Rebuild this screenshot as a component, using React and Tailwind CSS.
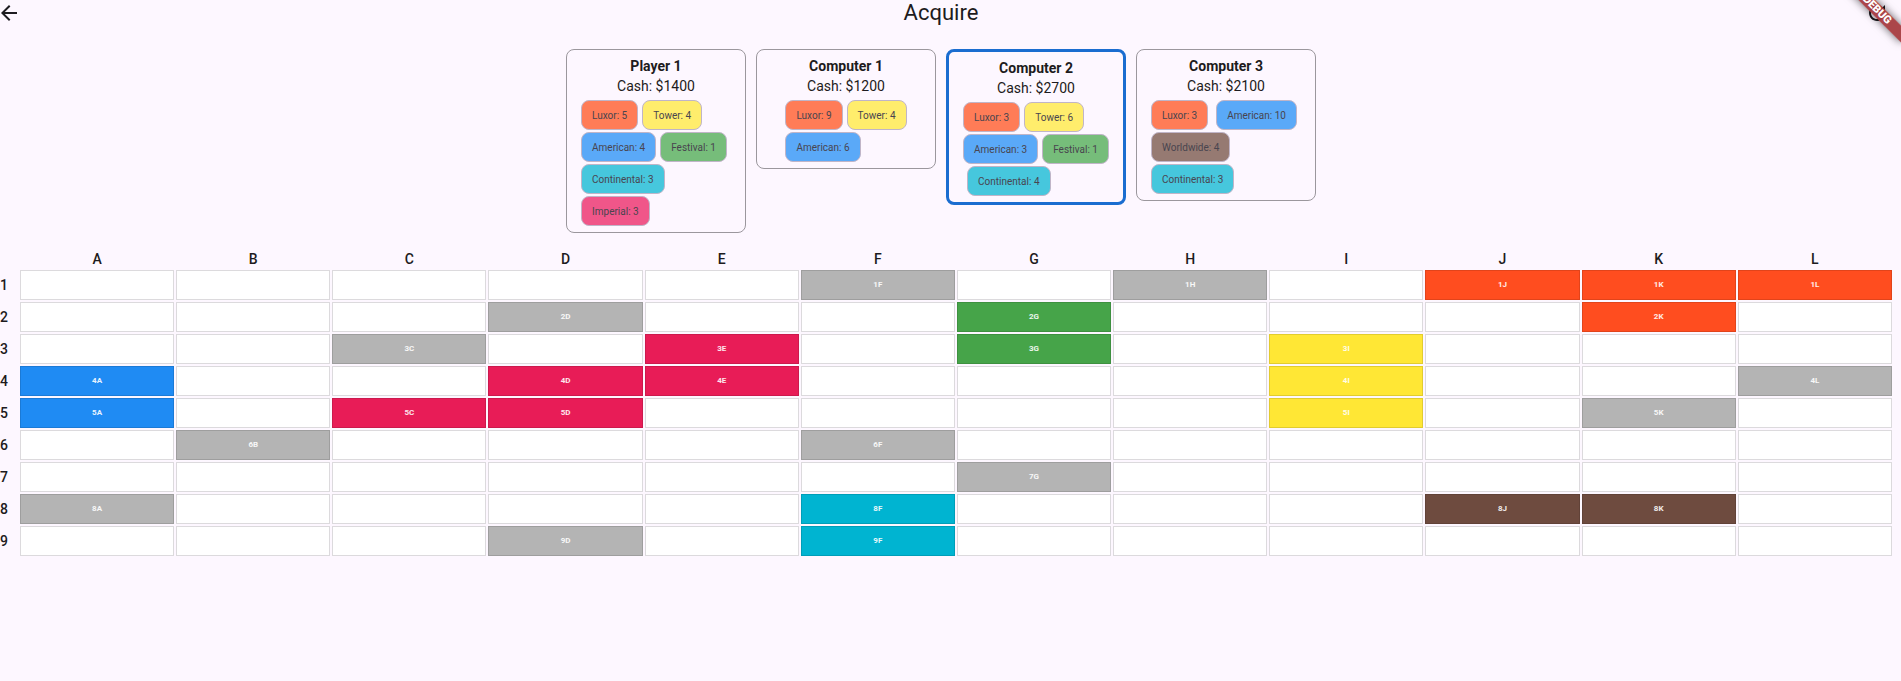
import React from 'react';

const chains = {
  Luxor: { chip: 'bg-[#ff7c57]', tile: 'bg-[#ff4d1f] border-[#e1441b]' },
  Tower: { chip: 'bg-[#ffed6c]', tile: 'bg-[#ffe735] border-[#e1cc2f]' },
  American: { chip: 'bg-[#5aa9f8]', tile: 'bg-[#1f8bf3] border-[#1b7ad6]' },
  Festival: { chip: 'bg-[#76bd7a]', tile: 'bg-[#46a449] border-[#3e9040]' },
  Worldwide: { chip: 'bg-[#967a72]', tile: 'bg-[#6e4b3f] border-[#614238]' },
  Continental: { chip: 'bg-[#46c7dd]', tile: 'bg-[#00b4d1] border-[#009eb8]' },
  Imperial: { chip: 'bg-[#f05689]', tile: 'bg-[#e81c57] border-[#cc194d]' },
};

// Each row lists [chain, shares]; null is a chain without shares, which keeps its gap.
const players = [
  {
    name: 'Player 1',
    cash: 1400,
    rows: [
      [['Luxor', 5], ['Tower', 4]],
      [['American', 4], ['Festival', 1], null],
      [['Continental', 3]],
      [['Imperial', 3]],
    ],
  },
  {
    name: 'Computer 1',
    cash: 1200,
    rows: [[['Luxor', 9], ['Tower', 4]], [['American', 6], null, null, null]],
  },
  {
    name: 'Computer 2',
    cash: 2700,
    active: true,
    rows: [
      [['Luxor', 3], ['Tower', 6]],
      [['American', 3], ['Festival', 1]],
      [null, ['Continental', 4], null],
    ],
  },
  {
    name: 'Computer 3',
    cash: 2100,
    rows: [
      [['Luxor', 3], null, ['American', 10], null],
      [['Worldwide', 4]],
      [['Continental', 3], null],
    ],
  },
];

const columns = 'ABCDEFGHIJKL'.split('');
const rows = [1, 2, 3, 4, 5, 6, 7, 8, 9];

const owners = {
  '1J': 'Luxor', '1K': 'Luxor', '1L': 'Luxor', '2K': 'Luxor',
  '2G': 'Festival', '3G': 'Festival',
  '3E': 'Imperial', '4E': 'Imperial', '4D': 'Imperial', '5C': 'Imperial', '5D': 'Imperial',
  '3I': 'Tower', '4I': 'Tower', '5I': 'Tower',
  '4A': 'American', '5A': 'American',
  '8F': 'Continental', '9F': 'Continental',
  '8J': 'Worldwide', '8K': 'Worldwide',
};
const loose = ['1F', '1H', '2D', '3C', '4L', '5K', '6B', '6F', '7G', '8A', '9D'];

function PlayerCard({ player }) {
  return (
    <section
      className={`flex w-[180px] flex-col items-center rounded-lg py-1.5 ${
        player.active ? 'border-3 border-[#1a6dd0]' : 'border border-[#9b979d]'
      }`}
    >
      <h2 className="text-sm/5 font-bold">{player.name}</h2>
      <p className="text-sm/5">Cash: ${player.cash}</p>
      <div className="mt-1 flex flex-col gap-0.5">
        {player.rows.map((row, i) => (
          <div key={i} className="flex gap-1">
            {row.map((share, j) =>
              share ? (
                <span
                  key={j}
                  className={`flex h-[30px] items-center whitespace-nowrap rounded-lg border border-[#c0b5c8] px-2.5 text-[10px] text-[#49454f] ${chains[share[0]].chip}`}
                >
                  {share[0]}: {share[1]}
                </span>
              ) : (
                <span key={j} className="w-0" />
              )
            )}
          </div>
        ))}
      </div>
    </section>
  );
}

function Tile({ id }) {
  const look = owners[id]
    ? chains[owners[id]].tile
    : loose.includes(id)
      ? 'bg-[#b4b4b4] border-[#9e9e9e]'
      : 'bg-white border-[#dcdadd]';
  const played = owners[id] || loose.includes(id);
  return (
    <div className={`flex h-[30px] items-center justify-center border text-[8px] font-bold text-white/90 ${look}`}>
      {played ? id : null}
    </div>
  );
}

export default function App() {
  return (
    <div className="relative min-h-screen overflow-hidden bg-[#fdf7ff] font-[Roboto,sans-serif] text-[#1d1b20]">
      <header className="flex items-center justify-between pr-3 pb-[15px]">
        <button type="button" aria-label="Back" className="w-[31px]">
          <svg viewBox="3 0 18 24" className="h-6 w-[18px]" fill="currentColor">
            <path d="M20 11H7.83l5.59-5.59L12 4l-8 8 8 8 1.41-1.41L7.83 13H20v-2z" />
          </svg>
        </button>
        <h1 className="pr-3.5 text-[22px]/[26px]">Acquire</h1>
        <button type="button" aria-label="Refresh">
          <svg viewBox="0 0 24 24" className="size-6" fill="currentColor">
            <path d="M17.65 6.35A7.958 7.958 0 0 0 12 4c-4.42 0-7.99 3.58-7.99 8s3.57 8 7.99 8c3.73 0 6.84-2.55 7.73-6h-2.08A5.99 5.99 0 0 1 12 18c-3.31 0-6-2.69-6-6s2.69-6 6-6c1.66 0 3.14.69 4.22 1.78L13 11h7V4l-2.35 2.35z" />
          </svg>
        </button>
      </header>

      <main>
        <div className="flex items-start justify-center gap-2.5 pt-2 pr-[19px]">
          {players.map((player) => (
            <PlayerCard key={player.name} player={player} />
          ))}
        </div>

        <div className="mt-4 pr-2">
          <table className="w-full table-fixed border-separate border-spacing-0">
            <thead>
              <tr>
                <td className="w-[19px] p-0" />
                {columns.map((c) => (
                  <th key={c} scope="col" className="p-0 text-center text-sm/5 font-medium">
                    {c}
                  </th>
                ))}
              </tr>
            </thead>
            <tbody>
              {rows.map((r) => (
                <tr key={r}>
                  <th scope="row" className="p-0 text-left text-sm/5 font-medium">
                    {r}
                  </th>
                  {columns.map((c) => (
                    <td key={c} className="p-px">
                      <Tile id={`${r}${c}`} />
                    </td>
                  ))}
                </tr>
              ))}
            </tbody>
          </table>
        </div>
      </main>

      <div className="pointer-events-none absolute -top-3.5 right-0 size-0">
        <div className="absolute top-0 left-0 origin-top-left rotate-45">
          <div className="absolute top-7 -left-10 h-3 w-20 bg-[#a63c40]/95 text-center text-[11px]/3 font-black text-white shadow-[0_0_8px_rgba(0,0,0,0.6)]">
            DEBUG
          </div>
        </div>
      </div>
    </div>
  );
}
